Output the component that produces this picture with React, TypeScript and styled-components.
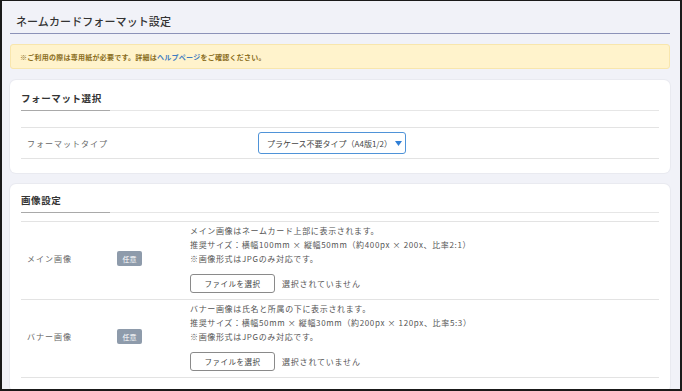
import styled, { createGlobalStyle } from "styled-components";

const GlobalStyle = createGlobalStyle`
  html, body {
    margin: 0;
    padding: 0;
    background: #f1f2f8;
  }
  * {
    box-sizing: border-box;
  }
`

const Page = styled.div`
  width: 682px;
  height: 391px;
  overflow: hidden;
  background: #f1f2f8;
  border-style: solid;
  border-color: #1a1a1a;
  border-width: 1px 2px 2px 2px;
  padding: 0 10px 0 8px;
  font-family: "Noto Sans CJK JP", "Noto Sans", sans-serif;
  color: #333;
`

const PageTitle = styled.h1`
  margin: 0;
  padding: 13px 0 5px 6px;
  font-size: 11px;
  font-weight: 500;
  letter-spacing: 0.1px;
  line-height: 14px;
  color: #333;
  border-bottom: 1px solid #8c92b8;
`

const Notice = styled.div`
  margin-top: 10px;
  height: 25px;
  display: flex;
  align-items: center;
  padding-left: 9px;
  background: #fff3cc;
  border: 1px solid #f8e6ad;
  border-radius: 3px;
  font-size: 7px;
  font-weight: 700;
  letter-spacing: 0.25px;
  color: #8a6d1c;
`

const NoticeLink = styled.span`
  color: #3f7bc0;
`

const Card = styled.section<{ $top: number }>`
  margin-top: 11px;
  background: #fff;
  border-radius: 6px;
  box-shadow: 0 0 0 1px #e9eaf0;
  padding: ${(p) => p.$top}px 11px 14px 11px;
`

const CardHeader = styled.div<{ $gap: number }>`
  display: flex;
  border-bottom: 1px solid #e6e6e6;
  margin-bottom: ${(p) => p.$gap}px;
`

const CardTitle = styled.h2`
  margin: 0 0 -1px 0;
  width: 89px;
  padding: 0 0 5px 0;
  font-size: 9.5px;
  font-weight: 700;
  letter-spacing: 0.6px;
  line-height: 14px;
  color: #333;
  border-bottom: 1px solid #a9a9a9;
`

const FormTable = styled.div`
  border-top: 1px solid #e3e3e3;
`

const SelectRow = styled.div`
  display: grid;
  grid-template-columns: 237px 1fr;
  align-items: center;
  height: 31px;
  border-bottom: 1px solid #e3e3e3;
`

const ImageRow = styled.div`
  display: grid;
  grid-template-columns: 96px 73px 1fr;
  align-items: center;
  padding: 2px 0 6px 0;
  border-bottom: 1px solid #e3e3e3;
`

const RowLabel = styled.div`
  padding-left: 6px;
  font-size: 8px;
  letter-spacing: 1px;
  color: #666;
`

const Select = styled.div`
  width: 148px;
  height: 22px;
  display: flex;
  align-items: center;
  justify-content: space-between;
  padding: 0 3px 0 8px;
  border: 1px solid #4f93d8;
  border-radius: 3px;
  background: #fff;
  font-size: 8px;
  white-space: nowrap;
  color: #444;
`

const Badge = styled.span`
  justify-self: start;
  width: 25px;
  height: 15px;
  display: flex;
  align-items: center;
  justify-content: center;
  background: #8e9bab;
  border-radius: 2px;
  font-size: 7px;
  color: #fff;
`

const Description = styled.div`
  font-size: 8px;
  line-height: 14px;
  letter-spacing: 0.65px;
  white-space: nowrap;
  color: #555;
`

const FileRow = styled.div`
  display: flex;
  align-items: center;
  gap: 7px;
  margin-top: 8px;
`

const FileButton = styled.button`
  width: 85px;
  height: 19px;
  padding: 0;
  background: #fff;
  border: 1px solid #8a8a8a;
  border-radius: 3px;
  font-family: inherit;
  font-size: 7.5px;
  letter-spacing: 0.5px;
  color: #444;
`

const FileState = styled.span`
  font-size: 8px;
  letter-spacing: 0.8px;
  color: #555;
`

const images = [
  {
    label: "メイン画像",
    lines: [
      "メイン画像はネームカード上部に表示されます。",
      "推奨サイズ：横幅100mm × 縦幅50mm（約400px × 200x、比率2:1）",
      "※画像形式はJPGのみ対応です。",
    ],
  },
  {
    label: "バナー画像",
    lines: [
      "バナー画像は氏名と所属の下に表示されます。",
      "推奨サイズ：横幅50mm × 縦幅30mm（約200px × 120px、比率5:3）",
      "※画像形式はJPGのみ対応です。",
    ],
  },
]

export default function App() {
  return (
    <>
      <GlobalStyle />
      <Page>
        <PageTitle>ネームカードフォーマット設定</PageTitle>
        <Notice>
          ※ご利用の際は専用紙が必要です。詳細は<NoticeLink>ヘルプページ</NoticeLink>をご確認ください。
        </Notice>

        <Card $top={11}>
          <CardHeader $gap={16}>
            <CardTitle>フォーマット選択</CardTitle>
          </CardHeader>
          <FormTable>
            <SelectRow>
              <RowLabel>フォーマットタイプ</RowLabel>
              <Select>
                <span>プラケース不要タイプ（A4版1/2）</span>
                <svg width="7" height="5" viewBox="0 0 7 5">
                  <path d="M0 0 L7 0 L3.5 5 Z" fill="#2f7fd6" />
                </svg>
              </Select>
            </SelectRow>
          </FormTable>
        </Card>

        <Card $top={9}>
          <CardHeader $gap={8}>
            <CardTitle>画像設定</CardTitle>
          </CardHeader>
          <FormTable>
            {images.map((img) => (
              <ImageRow key={img.label}>
                <RowLabel>{img.label}</RowLabel>
                <Badge>任意</Badge>
                <div>
                  <Description>
                    {img.lines.map((l) => (
                      <div key={l}>{l}</div>
                    ))}
                  </Description>
                  <FileRow>
                    <FileButton>ファイルを選択</FileButton>
                    <FileState>選択されていません</FileState>
                  </FileRow>
                </div>
              </ImageRow>
            ))}
          </FormTable>
        </Card>
      </Page>
    </>
  );
}
